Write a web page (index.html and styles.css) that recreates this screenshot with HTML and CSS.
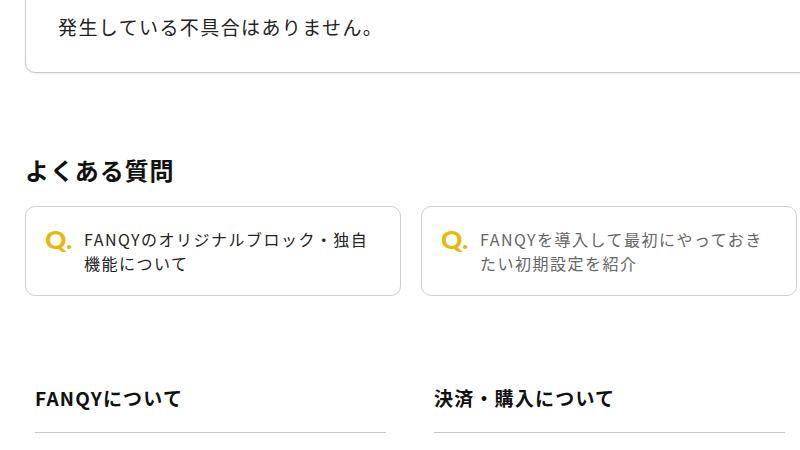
FILE: index.html
```html
<!DOCTYPE html>
<html lang="ja">
<head>
<meta charset="utf-8">
<title>FANQY</title>
<link rel="stylesheet" href="styles.css">
</head>
<body>
<div class="page">
  <section class="status">
    <p class="status-text">発生している不具合はありません。</p>
  </section>

  <section class="faq">
    <h2 class="faq-title">よくある質問</h2>
    <div class="faq-grid">
      <a class="faq-card" href="#">
        <span class="faq-q">Q.</span>
        <span class="faq-text">FANQYのオリジナルブロック・独自機能について</span>
      </a>
      <a class="faq-card faq-card--muted" href="#">
        <span class="faq-q">Q.</span>
        <span class="faq-text">FANQYを導入して最初にやっておきたい初期設定を紹介</span>
      </a>
    </div>
  </section>

  <section class="topics">
    <h3 class="topic-title">FANQYについて</h3>
    <h3 class="topic-title">決済・購入について</h3>
  </section>
</div>
</body>
</html>
```

FILE: styles.css
```css
html, body {
  margin: 0;
  padding: 0;
  background: #fff;
  overflow: hidden;
}

body {
  font-family: "Noto Sans CJK JP", "Noto Sans", sans-serif;
  color: #222;
}

.page {
  padding: 0 3px 0 25px;
}

.status {
  margin: -30px -40px 0 0;
  border: 1px solid #c9c9c9;
  border-radius: 10px;
  padding: 42px 32px 31px 32px;
  box-shadow: 0 1px 2px rgba(0, 0, 0, 0.06);
}

.status-text {
  margin: 0;
  font-size: 19px;
  line-height: 28px;
  letter-spacing: 1.4px;
  color: #222;
}

.faq {
  margin-top: 80px;
}

.faq-title {
  margin: 0 0 19px;
  font-size: 24px;
  line-height: 34px;
  font-weight: 700;
  letter-spacing: 0.9px;
  color: #111;
}

.faq-grid {
  display: grid;
  grid-template-columns: 1fr 1fr;
  gap: 20px;
}

.faq-card {
  display: flex;
  align-items: flex-start;
  gap: 11px;
  border: 1px solid #cfcfcf;
  border-radius: 10px;
  padding: 20px 26px 20px 19px;
  text-decoration: none;
  color: #222;
}

.faq-card--muted {
  color: #666;
}

.faq-q {
  flex: none;
  width: 28px;
  font-family: "Lato", "DejaVu Sans", sans-serif;
  font-weight: 900;
  font-size: 24px;
  line-height: 24px;
  color: #e8b90a;
  transform: scaleX(1.1);
  transform-origin: left center;
  padding-top: 1px;
}

.faq-text {
  font-size: 16px;
  line-height: 24px;
  letter-spacing: 1.5px;
}

.topics {
  margin-top: 88px;
  padding: 0 12px 0 10px;
  display: grid;
  grid-template-columns: 1fr 1fr;
  gap: 48px;
}

.topic-title {
  margin: 0;
  padding-bottom: 21px;
  border-bottom: 1px solid #c8c8c8;
  font-size: 19px;
  line-height: 27px;
  font-weight: 700;
  letter-spacing: 1.2px;
  color: #111;
}
```
